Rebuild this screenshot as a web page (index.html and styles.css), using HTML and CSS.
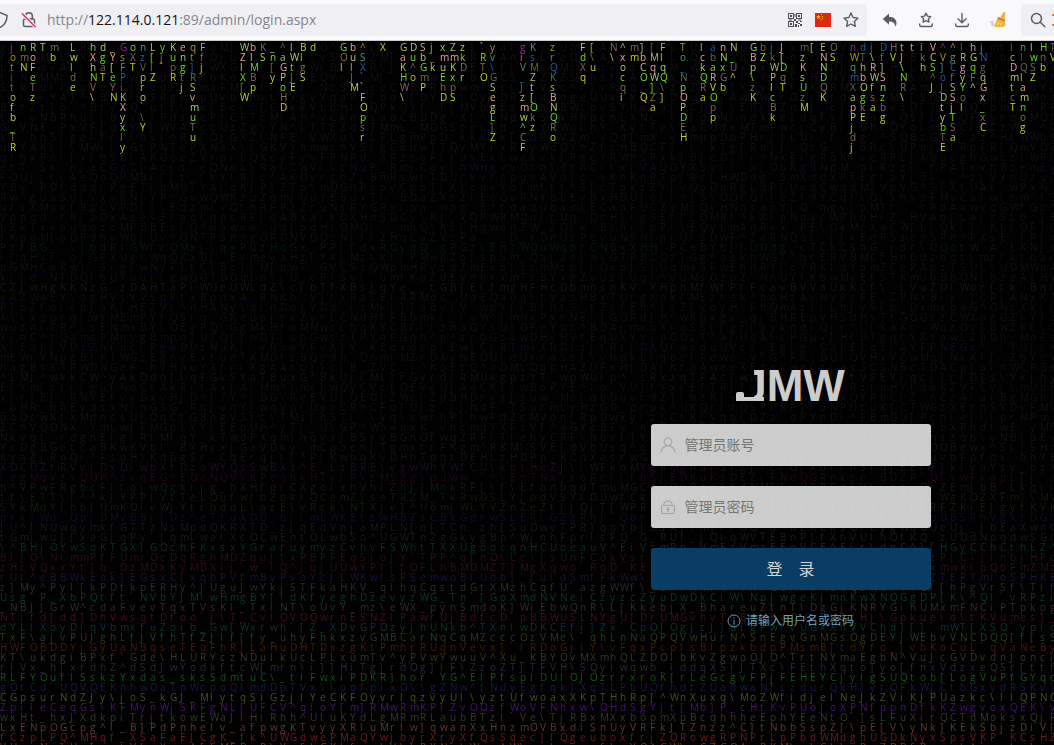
FILE: index.html
```html
<!DOCTYPE html>
<html lang="zh-CN">
<head>
<meta charset="utf-8">
<title>JMW</title>
<link rel="stylesheet" href="styles.css">
</head>
<body>
<header class="toolbar">
  <div class="urlbar">
    <svg class="shield" width="8" height="18" viewBox="0 0 8 18"><path d="M-7 4.5 L0 1.5 L7 4.5 C7 10 5 14 0 16.5" fill="none" stroke="#5b5b66" stroke-width="1.5"/></svg>
    <svg class="insecure" width="18" height="18" viewBox="0 0 18 18"><g fill="none" stroke="#5b5b66" stroke-width="1.5"><rect x="3.5" y="8" width="11" height="7.5" rx="1.5"/><path d="M5.7 8V5a3.3 3.3 0 0 1 6.6 0v3"/></g><path d="M2 2.5 15.5 16" stroke="#f0f0f4" stroke-width="3.5"/><path d="M2 2.5 15.5 16" stroke="#e22850" stroke-width="1.4"/></svg>
    <div class="url">http://<b>122.114.0.121</b>:89/admin/login.aspx</div>
    <button class="url-btn" aria-label="QR"><svg width="14" height="14" viewBox="0 0 14 14" fill="#4a4a52"><path fill-rule="evenodd" d="M0 0h6v6H0zM1 1v4h4V1zM8 0h6v6H8zM9 1v4h4V1zM0 8h6v6H0zM1 9v4h4V9zM2 2h2v2H2zM10 2h2v2h-2zM2 10h2v2H2zM8 8h2v2H8zM12 8h2v1h-2zM10 10h2v1h-2zM7 11h2v3H7zM12 11h2v2h-2zM10 12h1v2h-1zM6 6h2v2H6zM6.500 1h1v3h-1zM1 6.500h3v1H1zM10 6.500h3v1h-3z"/></svg></button>
    <button class="url-btn" aria-label="CN"><svg width="16" height="14" viewBox="0 0 16 14"><path fill="#de2910" d="M0 0h16v14H0z"/><path fill="#ffcf00" d="m3.500 1.500.6 1.700h1.800L4.500 4.300 5 6 3.500 5 2 6l.5-1.700L1.100 3.200h1.800zM6 1h1v1H6zM7 3h1v1H7zM7 5h1v1H7zM5.500 6.500h1v1h-1z"/></svg></button>
    <button class="url-btn" aria-label="收藏"><svg width="16" height="16" viewBox="0 0 16 16"><path d="m8 1 2.100 4.500 4.900.6-3.600 3.400.9 4.900L8 12l-4.300 2.400.9-4.900L1 6.100l4.900-.6z" fill="none" stroke="#5b5b66" stroke-width="1.400" stroke-linejoin="round"/></svg></button>
  </div>
  <nav class="tools">
    <button class="tool" aria-label="撤销"><svg width="16" height="16" viewBox="0 0 16 16"><path d="M7 1.500v3.300c5 0 7.500 3 7.500 6.200 0 1.500-.4 2.600-1.500 3.500.2-3.300-1.800-5-6-5v3.300L.8 7.100z" fill="#5b5b66"/></svg></button>
    <button class="tool" aria-label="书签"><svg width="16" height="16" viewBox="0 0 16 16" fill="none" stroke="#5b5b66" stroke-width="1.400" stroke-linejoin="round" stroke-linecap="round"><path d="m8 1.200 1.500 2.900 3.200.5-2.300 2.300.5 3.200L8 8.700l-2.900 1.400.5-3.200-2.300-2.300 3.200-.5zM1.700 12v1c0 1 .6 1.500 1.500 1.500h9.600c.9 0 1.500-.5 1.500-1.500v-1"/></svg></button>
    <button class="tool" aria-label="下载"><svg width="16" height="16" viewBox="0 0 16 16" fill="none" stroke="#5b5b66" stroke-width="1.400" stroke-linejoin="round" stroke-linecap="round"><path d="M8 1.500v9M4 6.800l4 4 4-4M1.700 12v1c0 1 .6 1.500 1.500 1.500h9.600c.9 0 1.500-.5 1.500-1.500v-1"/></svg></button>
    <button class="tool" aria-label="清理"><svg width="18" height="18" viewBox="0 0 18 18"><path d="M2 10c.3 2 .5 3.500 1.700 5M4 9.500V15" stroke="#c3d8d3" stroke-width="1.500" fill="none"/><path d="m14.500 1 2 .6-.7 6.400-4.300-1.800z" fill="#f0b040"/><path d="M10 5.700 15.800 8l.6 7c-3 1.600-8.500 1.500-11.600.2C7 12.500 7 8.300 10 5.700z" fill="#efb53e"/><path d="m8.600 7 7.400 2.600" stroke="#e2603c" stroke-width="1.500"/><path d="m8 14.500 2-3.500M11.500 15l.7-3.500" stroke="#fce295"/></svg></button>
  </nav>
  <div class="search">
    <svg width="16" height="16" viewBox="0 0 16 16" fill="none" stroke="#5b5b66" stroke-width="1.500" stroke-linecap="round"><circle cx="6.500" cy="6.500" r="5"/><path d="m10.300 10.300 4.500 4.500"/></svg>
    <svg class="engine" width="12" height="14" viewBox="0 0 12 14"><path d="M0 1h12v2H0zM2 6h10v2H2zM0 11h12v2H0z" fill="#f0803c"/></svg>
  </div>
</header>
<main class="stage">
  <div class="rain" id="rain" aria-hidden="true"></div>
  <form class="login">
    <h1 class="logo"><span class="logo-foot"><span class="logo-stem">J</span></span>MW</h1>
    <label class="field">
      <svg width="16" height="16" viewBox="0 0 16 16" fill="none" stroke="#a4a4a4" stroke-width="1.200"><circle cx="8" cy="4.800" r="3.800"/><path d="M1.200 15.500c0-4.300 3-6.800 6.800-6.800s6.800 2.500 6.800 6.800"/></svg>
      <input type="text" aria-label="管理员账号" placeholder="管理员账号">
    </label>
    <label class="field">
      <svg width="16" height="16" viewBox="0 0 16 16" fill="none" stroke="#a4a4a4" stroke-width="1.200"><rect x="1.500" y="6.500" width="13" height="8" rx="1.500"/><path d="M3.700 6.500C3.700 3.500 5.500 2 8 2s4.300 1.500 4.300 4.500M8 10.500v2.500"/><circle cx="8" cy="9.800" r="1"/></svg>
      <input type="password" aria-label="管理员密码" placeholder="管理员密码">
    </label>
    <button class="submit" type="button">登　录</button>
    <p class="tip"><svg width="14" height="14" viewBox="0 0 14 14" fill="none" stroke="#6499b0"><circle cx="7" cy="7" r="6"/><path d="M7 6v4.500M7 3.300v1.400"/></svg>请输入用户名或密码</p>
  </form>
</main>
<script src="rain.js"></script>
</body>
</html>
```
FILE: styles.css
```css
* { box-sizing: border-box; }
body {
  margin: 0;
  height: 100vh;
  display: flex;
  flex-direction: column;
  overflow: hidden;
  background: #000;
  font-family: "Open Sans", "Noto Sans CJK SC", sans-serif;
}
button { border: 0; padding: 0; background: none; font-family: inherit; }

.toolbar {
  display: flex;
  flex: none;
  align-items: center;
  height: 41px;
  padding: 4px 0;
  background: #f9f9fb;
  border-bottom: 1px solid #ccc;
}
.urlbar {
  display: flex;
  flex: 1;
  align-items: center;
  height: 32px;
  padding-right: 2px;
  background: #f0f0f4;
  border-radius: 0 4px 4px 0;
}
.insecure { margin: 0 9px 0 12px; }
.url { flex: 1; font-size: 14px; line-height: 20px; color: #85858d; white-space: nowrap; }
.url b { font-weight: 400; color: #15141a; }
.url-btn, .tool { display: flex; align-items: center; justify-content: center; width: 28px; height: 32px; }
.tools { display: flex; margin: 0 5px; }
.tool { width: 36px; }
.search {
  display: flex;
  align-items: center;
  gap: 6px;
  width: 33px;
  height: 32px;
  padding-left: 9px;
  overflow: hidden;
  background: #f0f0f4;
  border-radius: 4px 0 0 4px;
}
.search svg { flex: none; }

.stage {
  position: relative;
  display: grid;
  grid-template-columns: 1fr 1fr;
  align-items: end;
  flex: 1;
  min-height: 0;
  overflow: hidden;
}
.rain {
  position: absolute;
  inset: 0;
  overflow: hidden;
  padding-top: 1px;
  font-size: 10px;
  line-height: 10px;
  filter: brightness(1.2);
}
.rain-row { display: grid; grid-auto-flow: column; grid-template-rows: 10px; grid-auto-columns: 10px; height: 10px; white-space: pre; }
.drop-0 { color: #9db414; }
.drop-1 { color: #70584a; }
.drop-2 { color: #5abb16; }
.drop-3 { color: #94b052; }
.drop-4 { color: #c3858c; }
.drop-5 { color: #8ba35a; }
.drop-6 { color: #515944; }
.drop-7 { color: #15528f; }
.drop-8 { color: #3f7d78; }
.drop-9 { color: #8b8412; }
.drop-10 { color: #8a168c; }

.login {
  position: relative;
  grid-column: 2;
  display: flex;
  flex-direction: column;
  gap: 20px;
  width: 280px;
  margin: 0 auto 113px;
}
.logo {
  margin: 0 auto;
  color: #ccc;
  font-family: "Liberation Sans", sans-serif;
  font-size: 44px;
  font-weight: 700;
  line-height: 36px;
}
.logo-foot { position: relative; display: inline-block; padding-left: 6px; }
.logo-foot::before,
.logo-foot::after {
  content: "";
  position: absolute;
  left: 0;
  bottom: 3px;
  background: #ccc;
}
.logo-foot::before { width: 28px; height: 4px; }
.logo-foot::after { width: 8px; height: 9px; border-radius: 2px; }
.logo-stem { display: inline-block; clip-path: inset(0 0 0 12px); }
.field {
  display: flex;
  align-items: center;
  height: 42px;
  padding: 0 9px;
  gap: 9px;
  background: rgba(255, 255, 255, 0.8);
  border-radius: 3px;
}
.field input {
  flex: 1;
  min-width: 0;
  padding: 0 0 2px;
  border: 0;
  outline: 0;
  background: none;
  font-family: inherit;
  font-size: 14px;
  color: #333;
}
.field input::placeholder { color: #757575; }
.submit {
  height: 42px;
  padding-bottom: 3px;
  border-radius: 3px;
  background: rgba(11, 66, 107, 0.92);
  color: #d0d4d8;
  font-size: 16px;
}
.tip {
  display: flex;
  align-items: center;
  justify-content: center;
  gap: 5px;
  margin: 0;
  color: #6fa3ba;
  font-size: 12px;
  line-height: 22px;
}
```
FILE: rain.js
```js
const COLS = 106;
const ROWS = 71;
const GLYPHS = 'ABCDEFGHIJKLMNOPQRSTUVWXYZ[]^_`abcdefghijklmnopqrstuvwxyz'.replace('I', 'l') + '\\';

let seed = 89;
const nextGlyph = () => {
  seed = (seed * 1103515245 + 12345) % 2147483648;
  return GLYPHS[Math.floor(seed / 65536) % GLYPHS.length];
};
const filler = n => Array.from({ length: Math.max(0, n) }, nextGlyph).join('');

// Fading trail lines, [row, colour, left, middle, right]
const trails = String.raw`
36 #0d100f _pHR_hbEydsxNJnGSG~RhJynYJwqVplUyvC RhCFu[U[z~JJNdF~TSurmLyHzGD_prpk^UK QrlzQSPfRP]luNPUtuK[CTWGzXErnSYDvFMV
37 #0c1210 poOcwKfXMdhcsU[OhCtGBngVStc\TMs[nST i~\yq\kwrhPjhwFdZcMVon[RpDwxylz[CtK J\bblDZa~oPYnDi^FBmGU[Pchle[llprNPm
38 #0e1010 ZCnVQONX~YmLwJFMGpLYYlEEpUH^yTj_U\G P^WhanxK_vhcmdYXFsVf^aGYeBFy~K ^bXPhdlwE~yMC
39 #111111 Nkvqt_rdgnElglRlMlqY_kTwdPXqm]nqvxJ BSrvBGnOfwqZRFiTlehyCRF\hbvlTY nszob\vNBlpEv
40 #0d140f YcDgBGetcaBKwKVbl_RYHcxjGaVDky_mCpo enJTgmxlrFKgm^RKMlSVE[dVbUsq^o OOBewx^Sl]SHn
41 #111111 KyagjRnQi^FspH]KdpgSr~CqErqjl[^PJKw hqKvDHhTpbtDEHLzHDPp_KCdXasrwG uvbFpfok~bhYE
42 #150f20 XOCUZtRVvlDxOiwbXtDzoWYQsSwBXs^E_Lz BRE\vgwWhYWfCU\kb\HeZJ\iWFknMYgRMgn T]klvaYsv_bzX
43 #200612 legMqVz\QOH^svqEG^EOaNQV\KPeohkHTvl P\zMSgg\puww_~^\EnTNx]roRcllfbSJEDK Q\\wFkapL[j~a
44 #0c1a10 h^VPwFRgbcFllojwQgkijg_hXHfpiCXgolx hVhlZhJ]MnkRF[\f\EfbnbqdTmuMGC rZEmJbB_Lkqii
45 #121708 tf\ETT\l^^kJYPP[VtTeLOufwtbZbklQCem Z]seTRZM_TkRwDSLYJodVSYlDUwfCk ~WgKOZXFm]\MV
46 #0e1c0f SYkMdYlhblUmKOivWJYtrbddL\azE\vRck\ NTXjv]^UomjWLYVZnZeZtjjQjT[WPR RFZKiEJgytKVK
47 #0d0c2a prk]Wu_QpjDMvBBj[Dz^eTtuXDD_bjlmLWK EtswHBZsCBxGdrwSLERlGZgRhJ~Qbr pDBSRhVgktDGh
48 #161616 JU^JNUwqymkfGTTzNsMpdQKRXTD_zjqEdVn jaMPLN[n[TCn~zh[SuOwyTPR]qoYbJ UeUj_JbEaXwnG
49 #171716 tGmjwu][xaGjqPy~[qmlwalXcOCwEntOLwb So^UGWTn2gGkygBp^WjnnFprlsFQ~G_RUf jQiqWVTEBnP]fXhVUlhOfKQ_zUOdNpqdwSGl
50 #052b20 \^BHjOYwSoKTGXlGOchFKxsxYGraruymvzC vhvFSWhtTXXUgoocqnHCUoeauV^EiVzmRn_ VmEzVmzEEoVCE^Eir\dgC^]lHGyCChCthLZ^
51 #2b0b14 Bl[O\NlmmPfFUmrOcDqRghMDZquJtxPBPFE qSioJY~TPP^qJnO\Lc\[sUnFCdkVsrSsdbN bc[g\UUOt^zScUH^NgvFgkkzP[C\]lnbjHPc
52 #2b0b1c zHcVQxxYt]b_DzMOxKyMDXlj~w~lQ^jujUU wYPljfOFLhBMDMZT]MgXqwo~RqD~KE~mNeT xmwKlpQbFmZMz
53 #1e0e34 rUl^eBBWkEok]EGsxC[xqbPVfmByPvoYcJL WKwlsFSemwoBlUdb]~JuldSmfFkWw\qKGvd jFbhoRepldcJfnCGnlQKMvwZTEPTmioSPHKE
54 #252521 z]My^Pyl[kPDtkpERHy^JUguJwYkjSTFkaH KV_qlhqCqstdGtXMzhCqfU~azgWWf\_ExlR MlUFYhlCUHxaWbdQswdT\\Cl[hPgVrSf\Tlf
55 #043424 Usg~P_XbPQtft~NVbYJMlwHmgBY[ldKfyeg hDzevyzWG_Tn~[GoXmdNVNelCzyzcZyuDwD kClW\NpjwgeKjmnKwXNQGgDP[K\^Ql~vRPzi
56 #2d2529 _NBJJGrW^cdaFvevTqxTVsKl_TxlNT\oUvY _mz\eWX_pynSmdoK]WiEbwQnR\L[KkebjX_ BhareuZtnTlDgGjKNRYGihUMxmFNCiPTpkog
57 #3d0d12 NTifd[dd]DhVwsqtDfoo~j\T_CvlOVOQwrn ESNZlPawrUjBdfcD~pBBWUSLNYgU[DrUMGv hvTlBcsKwQUotXTrHj\Gpkueio\tKVumes]_
58 #063126 dYLlXoyDlqVbmxfuZoib_Gw[Wxrwh~[Z_XD vGPOzyjhUNkb^TXnlwDKCEfi]Zx~CpOJOgj cJ]dlgPwlvUGxXnVVChd][]~mWT[XSO~yplc
59 #28340e TxF\ajvPUJghLfJVfhTfZJlf[fy_uhyFhkx zvGMBCarNqCqMZcccOzVMe\~qhLnNaQPQVw HurN^SnEgvGnMGsOgDEYjWEbvVNCDQQ[f[sS
60 #431605 HWFOBDDYjGyUaNBqseTEoFhRJLaHuDHTDxz gKtPmhrRUqnVevx]~lRDoGjiY\vFqxPcpls BlpzkbdpPMsmB[tdYfo_jvhKoCuL~qVaNeBy
61 #2b3412 KT\ukdgiBPxf~Gde\HLURYczNDulkUcLPLx umTv^yPVwYwuuV^Xu_KBYOvMXmhQLZDOlbK vZgwoOJO^TrtNYmaEgbN^VuJcGVDvdnJonci
62 #29222b rlVx_hjxrdhZ^dSdJwYodkftcW[mrn\i]]H iTgjrdOg]lF\ZzoZTJTFVH\SQylwqwb_ldd qXSlJTXc\FEthXqto]yo[fnxVdzxeQSr[ttf
63 #0d4a12 RLFYOuflSskzYxdas_sksSdmtuC\_tlFwxi PDKR]hor~YG^ElPfsplDUlOJOzrrxroK[rL eGcgvFPjFEHEYCjylgSUQtob[LogVuPfGYqc
64 #171542 gOrCd~UQVQEKnhwOaTnWcpoQlmdDpTVx\lo ofpixO\\gZNw^fNdyEgfqk]XqTLPbUQfhdt ZUadwaNfczdurQxH]ytQFkWJCtbGxydRSKv]
65 #424217 CGpsurNdZJy\joS_kGJ_MlytqSiGzjlYeCK FOyvrlqzvyUl\yztUfwoaxXKpTHhRp[^WnX uxq\MoZWfidjelNeJkZViKJPUazkc\llQPNC
66 #410e66 ZpileCeqGs\KFMynWjSKFgNL[UFCV^qloY[ m]RMwRmKPlZvOOzfWoVFNhxw\OHdSgYjt[M b]P_cHtKvPUoJoXPNfppnDfkKZwgvoxQEK\v
67 #2a3515 wxHt_hxJXdkpiTrjtkowEWaJlHiRhh^UluK YdLgMRmRLaubBTzl~Ve\TjRBxMXxbopmXpB cqhhheEphYEeNtO~]sLFuXirQCTdMoksxQjF
68 #513127 LxENpOGcpg^l_B]PdPnhelv_afpwgKTvyyX RluMrlw]qwanXxHnzmOVBxdiSnUyVRFkJTZ nzz^C]tNbbSspZ[\pE[V\yNk]KEkSbjzDiVl
69 #5c161b fCzpLPQ^MHqf_XSaFaEJCgK_fk^UWGdwePM aQYwjbyrXryXfQsSdec]lQgeuboxfrjZORo wgRPNPrLpPbdWMdghUGDkNyxSpsVKP~KCsHZ
`.trim().split('\n').map(line => line.split(' '));

// Falling drops, column then glyphs from the top edge down
const drops = String.raw`
1 jotitofb_TR|2 nmN|3 RoFeTz|4 T|5 mb|7 Lwlde|9 hXhNV\|10 dgaT|11 _Y[eYN|12 GsFPiKXyxly|13 oXT|14 nzVpro~\Y|15 L[lZ|16 yj~|17 KupR|18 engtj|19 qt]RSvmuTu|20 Ffj|24 WZlX[W|25 blMBp|26 KS|27 _n[y|28 ^aGPoHD|29 lWtJE|30 BlgS|31 d|34 GOl|35 bulJM|36 ^SX~~FOpsr|38 X|40 GaKHW\|41 Du^o|42 SbGmP|43 j_k|44 xmuEhD|45 ZmKxpS|46 zkDr|48 ~RTO|49 yv\GSegL]Z|52 giV_Jzmw^CF|53 KsMZt[Okz|55 zrQKsBNQRo|58 FdXq|59 [\u|61 N\|62 ^xocqi|63 mm|64 ]bCO_Q|65 [MqW]Za|66 FlqQ\]|68 To_NpOPDEH|70 lckQRa|71 abaRVOpp|72 nNxGb|73 N_U^|75 GBp\zK|76 bZ|77 jkWPlcBk|78 J[DqT|80 mzKsUzM|81 [|82 ENNDQK|83 OS|85 nWqmXapPjdj|86 dThbOgkE|87 j\RWfsa|88 Df]Snzbg|89 HV|90 tJ\NR\|91 t|92 ikh|93 VCS^J|94 ^V]oJDtybTE|95 ^gCfSSjTSa|96 lRgyYol|97 hGqF^|98 jNgqGx_xC|101 lcDmtcT|102 nlQlamnog|103 lwSZ|104 Hnb|105 TV
`.trim().split('|').map(item => item.split(' '));

const rows = Array.from({ length: ROWS }, (_, i) => ({
  color: i < 11 ? '#101010' : '#0e0e0e',
  text: filler(COLS)
}));
[[3, '#180a1a'], [12, '#16081a'], [20, '#041517'], [24, '#161604'], [30, '#0c0c1c'], [33, '#121408'], [70, '#60330f']]
  .forEach(([i, color]) => { rows[i].color = color; });

for (const [row, color, left, mid, right] of trails) {
  const tail = right.length < 35 ? filler(36 - right.length) + right : right;
  rows[row] = { color, text: left + mid + filler(35 - mid.length) + tail };
}

const lit = new Map();
for (const [col, glyphs] of drops) {
  [...glyphs].forEach((glyph, i) => lit.set(`${i}:${col}`, [glyph, glyphs.length - 1 - i]));
}

const rain = document.getElementById('rain');
rows.forEach((row, y) => {
  const line = document.createElement('div');
  line.className = 'rain-row';
  line.style.color = row.color;
  [...row.text].forEach((glyph, x) => {
    const cell = document.createElement('span');
    const drop = lit.get(`${y}:${x}`);
    if (drop) cell.className = `drop-${drop[1]}`;
    cell.textContent = (drop ? drop[0] : glyph).replace('~', '`');
    line.append(cell);
  });
  rain.append(line);
});
```
